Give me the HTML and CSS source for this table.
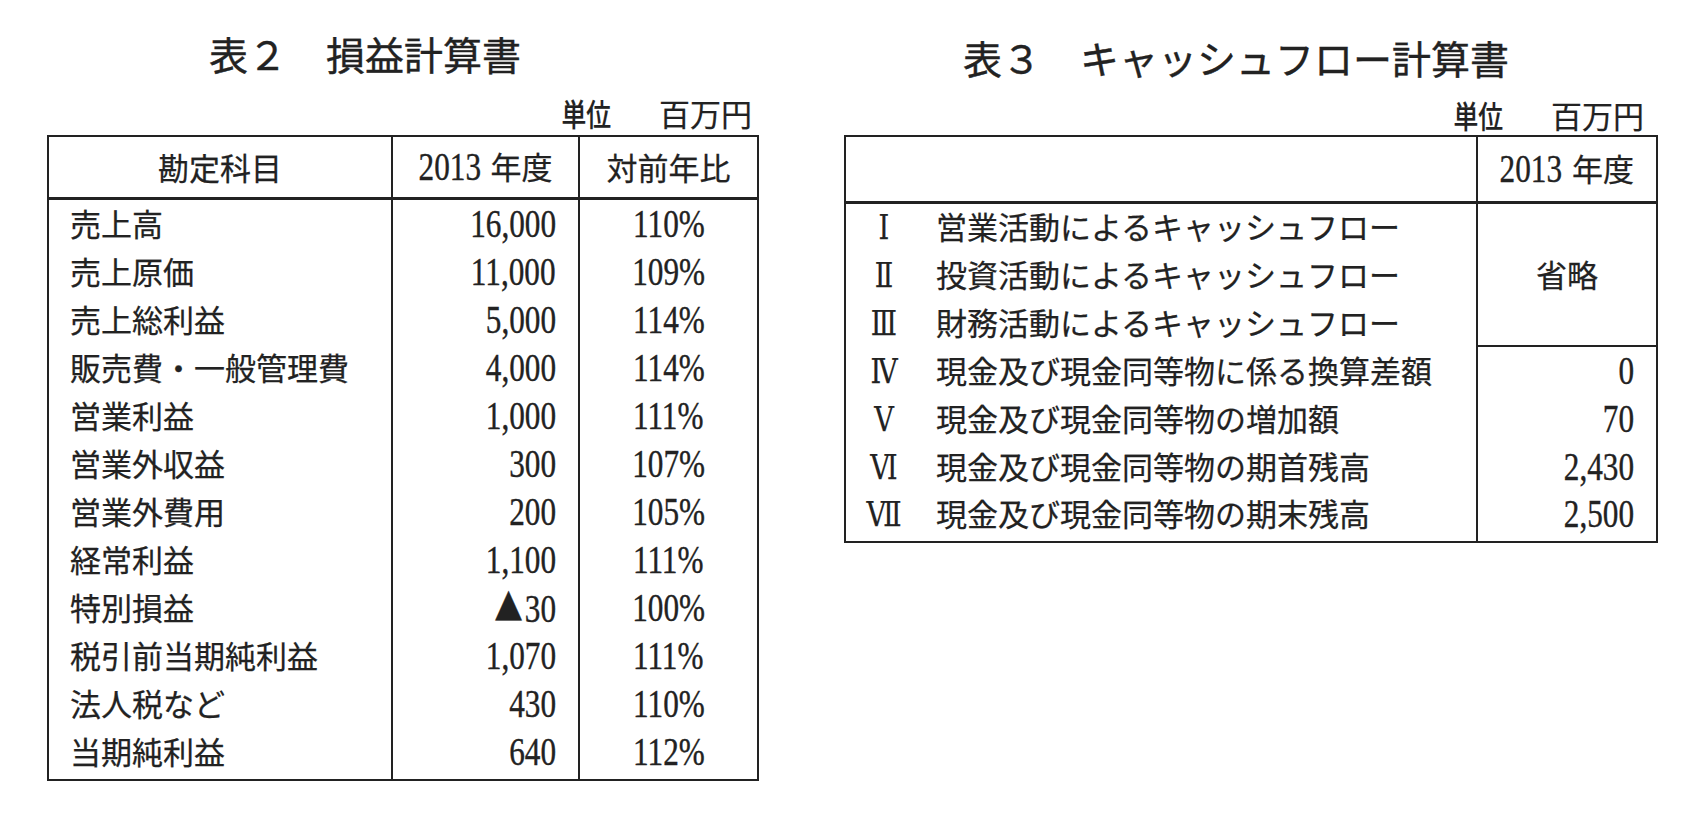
FILE: index.html
```html
<!DOCTYPE html>
<html lang="ja">
<head>
<meta charset="utf-8">
<title>表2 損益計算書 / 表3 キャッシュフロー計算書</title>
<link rel="stylesheet" href="styles.css">
</head>
<body>
<main class="page">
  <section class="panel panel-pl">
    <h1 class="title">表２　損益計算書</h1>
    <p class="unit"><b>単位</b><span>百万円</span></p>
    <table class="tbl pl">
      <colgroup><col class="c-name"><col class="c-val"><col class="c-ratio"></colgroup>
      <thead>
        <tr><th>勘定科目</th><th><span class="num num-h">2013</span>年度</th><th>対前年比</th></tr>
      </thead>
      <tbody>
        <tr class="first"><td class="name">売上高</td><td class="val"><span class="num">16,000</span></td><td class="ratio"><span class="num">110%</span></td></tr>
        <tr><td class="name">売上原価</td><td class="val"><span class="num">11,000</span></td><td class="ratio"><span class="num">109%</span></td></tr>
        <tr><td class="name">売上総利益</td><td class="val"><span class="num">5,000</span></td><td class="ratio"><span class="num">114%</span></td></tr>
        <tr><td class="name">販売費・一般管理費</td><td class="val"><span class="num">4,000</span></td><td class="ratio"><span class="num">114%</span></td></tr>
        <tr><td class="name">営業利益</td><td class="val"><span class="num">1,000</span></td><td class="ratio"><span class="num">111%</span></td></tr>
        <tr><td class="name">営業外収益</td><td class="val"><span class="num">300</span></td><td class="ratio"><span class="num">107%</span></td></tr>
        <tr><td class="name">営業外費用</td><td class="val"><span class="num">200</span></td><td class="ratio"><span class="num">105%</span></td></tr>
        <tr><td class="name">経常利益</td><td class="val"><span class="num">1,100</span></td><td class="ratio"><span class="num">111%</span></td></tr>
        <tr><td class="name">特別損益</td><td class="val"><span class="num"><span class="tri">▲</span>30</span></td><td class="ratio"><span class="num">100%</span></td></tr>
        <tr><td class="name">税引前当期純利益</td><td class="val"><span class="num">1,070</span></td><td class="ratio"><span class="num">111%</span></td></tr>
        <tr><td class="name">法人税など</td><td class="val"><span class="num">430</span></td><td class="ratio"><span class="num">110%</span></td></tr>
        <tr class="last"><td class="name">当期純利益</td><td class="val"><span class="num">640</span></td><td class="ratio"><span class="num">112%</span></td></tr>
      </tbody>
    </table>
  </section>

  <section class="panel panel-cf">
    <h1 class="title">表３　キャッシュフロー計算書</h1>
    <p class="unit"><b>単位</b><span>百万円</span></p>
    <table class="tbl cf">
      <colgroup><col class="c-item"><col class="c-amt"></colgroup>
      <thead>
        <tr><th></th><th><span class="num num-h">2013</span>年度</th></tr>
      </thead>
      <tbody>
        <tr class="first"><td class="item"><span class="roman">Ⅰ</span><span class="label">営業活動によるキャッシュフロー</span></td><td class="omit" rowspan="3">省略</td></tr>
        <tr><td class="item"><span class="roman">Ⅱ</span><span class="label">投資活動によるキャッシュフロー</span></td></tr>
        <tr><td class="item"><span class="roman">Ⅲ</span><span class="label">財務活動によるキャッシュフロー</span></td></tr>
        <tr><td class="item"><span class="roman">Ⅳ</span><span class="label">現金及び現金同等物に係る換算差額</span></td><td class="val"><span class="num">0</span></td></tr>
        <tr><td class="item"><span class="roman">Ⅴ</span><span class="label">現金及び現金同等物の増加額</span></td><td class="val"><span class="num">70</span></td></tr>
        <tr><td class="item"><span class="roman">Ⅵ</span><span class="label">現金及び現金同等物の期首残高</span></td><td class="val"><span class="num">2,430</span></td></tr>
        <tr class="last"><td class="item"><span class="roman">Ⅶ</span><span class="label">現金及び現金同等物の期末残高</span></td><td class="val"><span class="num">2,500</span></td></tr>
      </tbody>
    </table>
  </section>
</main>
</body>
</html>
```

FILE: styles.css
```css
* { box-sizing: border-box; }

html, body {
  margin: 0;
  background: #ffffff;
}

body {
  font-family: "Noto Sans CJK JP", "Noto Sans", sans-serif;
  color: #222222;
}

.page {
  display: flex;
  gap: 87px;
  padding-left: 47px;
}

.panel-pl { width: 710px; padding-top: 28px; }
.panel-cf { width: 812px; padding-top: 32px; }

.title {
  margin: 0;
  font-size: 39px;
  font-weight: 400;
  line-height: 50px;
  white-space: nowrap;
  -webkit-text-stroke: 0.4px #222;
}
.panel-pl .title { padding-left: 162px; }
.panel-cf .title { padding-left: 119px; }

.unit {
  display: flex;
  justify-content: flex-end;
  align-items: center;
  gap: 48px;
  margin: 17px 0 4px;
  font-size: 31px;
  line-height: 36px;
  -webkit-text-stroke: 0.2px #222;
}
.unit b {
  display: inline-block;
  font-weight: 500;
  transform: scaleX(0.8);
  transform-origin: right center;
}
.panel-pl .unit { padding-right: 5px; }
.panel-cf .unit { padding-right: 12px; margin: 15px 0 2px; }

.tbl {
  width: 100%;
  border-collapse: collapse;
  table-layout: fixed;
  border: 2px solid #222;
  font-size: 31px;
  -webkit-text-stroke: 0.25px #222;
}

.tbl th {
  height: 62px;
  padding: 0;
  font-weight: 400;
  text-align: center;
  border: 2px solid #222;
  border-bottom-width: 3px;
  white-space: nowrap;
}

.tbl td {
  height: 48px;
  padding: 0;
  border-left: 2px solid #222;
  border-right: 2px solid #222;
  white-space: nowrap;
  line-height: 40px;
}

.pl .c-name { width: 344px; }
.pl .c-val { width: 187px; }
.pl .c-ratio { width: 179px; }

.pl .first td { height: 49px; padding-top: 0; }
.pl .last td { height: 53px; padding-bottom: 4px; }

.name { padding-left: 21px !important; }
.val { text-align: right; padding-right: 22px !important; }
.ratio { text-align: center; }

.num {
  display: inline-block;
  font-family: "Liberation Serif", serif;
  font-size: 40px;
  transform: scaleX(0.78);
  transform-origin: right center;
  vertical-align: -1px;
  -webkit-text-stroke: 0.4px #222;
}
.ratio .num { transform-origin: center center; }
.num-h { transform-origin: right center; margin-left: -18px; margin-right: 10px; }

.tri {
  font-family: "Noto Sans CJK JP", sans-serif;
  font-size: 36px;
  vertical-align: 1px;
  margin-right: 3px;
}

.cf th { height: 66px; }
.cf .c-item { width: 632px; }
.cf .c-amt { width: 180px; }
.cf .item { padding-left: 9px; }
.cf .first td { height: 48px; padding-top: 0; }
.cf .last td { height: 52px; padding-bottom: 4px; }

.roman {
  display: inline-block;
  width: 58px;
  text-align: center;
  font-family: "DejaVu Serif", "Liberation Serif", serif;
  font-size: 34px;
  transform: scaleX(0.8);
}

.label { margin-left: 23px; }

.omit {
  text-align: center;
  vertical-align: middle;
  border-bottom: 2px solid #222;
}
```
